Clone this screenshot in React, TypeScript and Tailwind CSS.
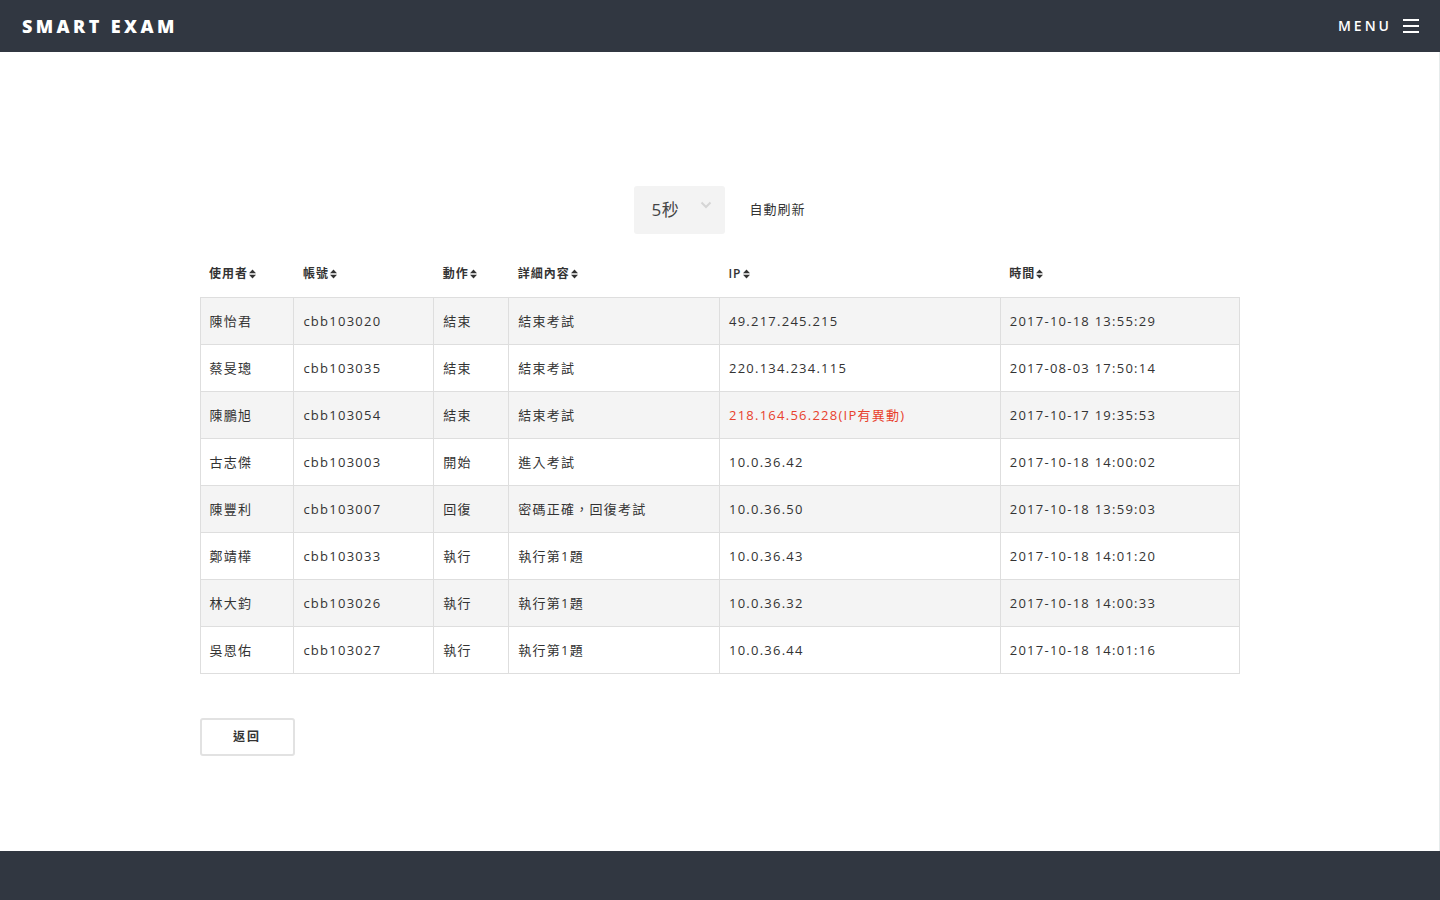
const rows = [
  { user: "陳怡君", account: "cbb103020", action: "結束", detail: "結束考試", ip: "49.217.245.215", time: "2017-10-18 13:55:29" },
  { user: "蔡旻璁", account: "cbb103035", action: "結束", detail: "結束考試", ip: "220.134.234.115", time: "2017-08-03 17:50:14" },
  { user: "陳鵬旭", account: "cbb103054", action: "結束", detail: "結束考試", ip: "218.164.56.228(IP有異動)", time: "2017-10-17 19:35:53", warn: true },
  { user: "古志傑", account: "cbb103003", action: "開始", detail: "進入考試", ip: "10.0.36.42", time: "2017-10-18 14:00:02" },
  { user: "陳豐利", account: "cbb103007", action: "回復", detail: "密碼正確，回復考試", ip: "10.0.36.50", time: "2017-10-18 13:59:03" },
  { user: "鄭靖樺", account: "cbb103033", action: "執行", detail: "執行第1題", ip: "10.0.36.43", time: "2017-10-18 14:01:20" },
  { user: "林大鈞", account: "cbb103026", action: "執行", detail: "執行第1題", ip: "10.0.36.32", time: "2017-10-18 14:00:33" },
  { user: "吳恩佑", account: "cbb103027", action: "執行", detail: "執行第1題", ip: "10.0.36.44", time: "2017-10-18 14:01:16" },
];

const headers = ["使用者", "帳號", "動作", "詳細內容", "IP", "時間"];
const widths = ["w-[94px]", "w-[140px]", "w-[75px]", "w-[211px]", "w-[281px]", "w-[239px]"];

function SortIcon() {
  return (
    <svg width="7" height="10" viewBox="0 0 7 10" className="inline-block ml-px -mt-px align-middle">
      <path d="M3.5 0.5 L7 4.2 L0 4.2 Z" fill="#333" />
      <path d="M3.5 9.5 L7 5.8 L0 5.8 Z" fill="#333" />
    </svg>
  );
}

export default function App() {
  return (
    <div
      className="min-h-[900px] flex flex-col bg-white text-[#333]"
      style={{ fontFamily: '"Open Sans", "Noto Sans CJK TC", sans-serif' }}
    >
      {/* Top bar */}
      <header className="h-[52px] bg-[#313741] flex items-center justify-between pl-[22px] pr-[21px]">
        <div className="text-white font-extrabold text-[18px] tracking-[3.4px] leading-none">SMART EXAM</div>
        <div className="flex items-center gap-[11px]">
          <span className="text-white text-[14px] tracking-[3px] font-semibold leading-none">MENU</span>
          <div className="flex flex-col gap-[4px] w-[16px]">
            <span className="h-[2px] bg-white" />
            <span className="h-[2px] bg-white" />
            <span className="h-[2px] bg-white" />
          </div>
        </div>
      </header>

      <main className="flex-1 h-[799px] border-r border-[#e6ebeb]">
        <div className="w-[1040px] mx-auto pt-[134px]">
          {/* Refresh control */}
          <div className="flex items-center justify-center gap-[24px] pl-[1px]">
            <div className="w-[91px] h-[48px] bg-[#f3f3f3] rounded-[3px] flex items-center pl-[17px] relative">
              <span className="text-[17px] text-[#444] tracking-[0.5px]">5秒</span>
              <svg width="12" height="8" viewBox="0 0 12 8" className="absolute right-[13px] top-[15px]">
                <path d="M1.5 1.5 L6 6 L10.5 1.5" stroke="#d5d5d5" strokeWidth="2" fill="none" />
              </svg>
            </div>
            <span className="text-[13px] tracking-[1px] text-[#333]">自動刷新</span>
          </div>

          {/* Table */}
          <table className="mt-[28px] w-[1040px] border-collapse text-[13px] tracking-[1.25px]">
            <thead>
              <tr className="h-[35px]">
                {headers.map((h, i) => (
                  <th key={h} className={`${widths[i]} text-left font-semibold text-[12px] tracking-[1px] px-[9px] pt-[3px] align-top`}>
                    {h}
                    <SortIcon />
                  </th>
                ))}
              </tr>
            </thead>
            <tbody>
              {rows.map((r, i) => (
                <tr key={r.account} className={i % 2 === 0 ? "bg-[#f4f4f4] h-[47px]" : "bg-white h-[47px]"}>
                  <td className="border border-[#dedede] px-[9px] pt-[2px]">{r.user}</td>
                  <td className="border border-[#dedede] px-[9px] pt-[2px]">{r.account}</td>
                  <td className="border border-[#dedede] px-[9px] pt-[2px]">{r.action}</td>
                  <td className="border border-[#dedede] px-[9px] pt-[2px]">{r.detail}</td>
                  <td className={`border border-[#dedede] px-[9px] pt-[2px] ${r.warn ? "text-[#e8412c]" : ""}`}>{r.ip}</td>
                  <td className="border border-[#dedede] px-[9px] pt-[2px]">{r.time}</td>
                </tr>
              ))}
            </tbody>
          </table>

          <button className="mt-[44px] w-[95px] h-[38px] border-2 border-[#e2e2e2] rounded-[3px] bg-white text-[12px] font-semibold tracking-[2px] text-[#333]">
            返回
          </button>
        </div>
      </main>

      <footer className="h-[49px] bg-[#313741]" />
    </div>
  );
}
